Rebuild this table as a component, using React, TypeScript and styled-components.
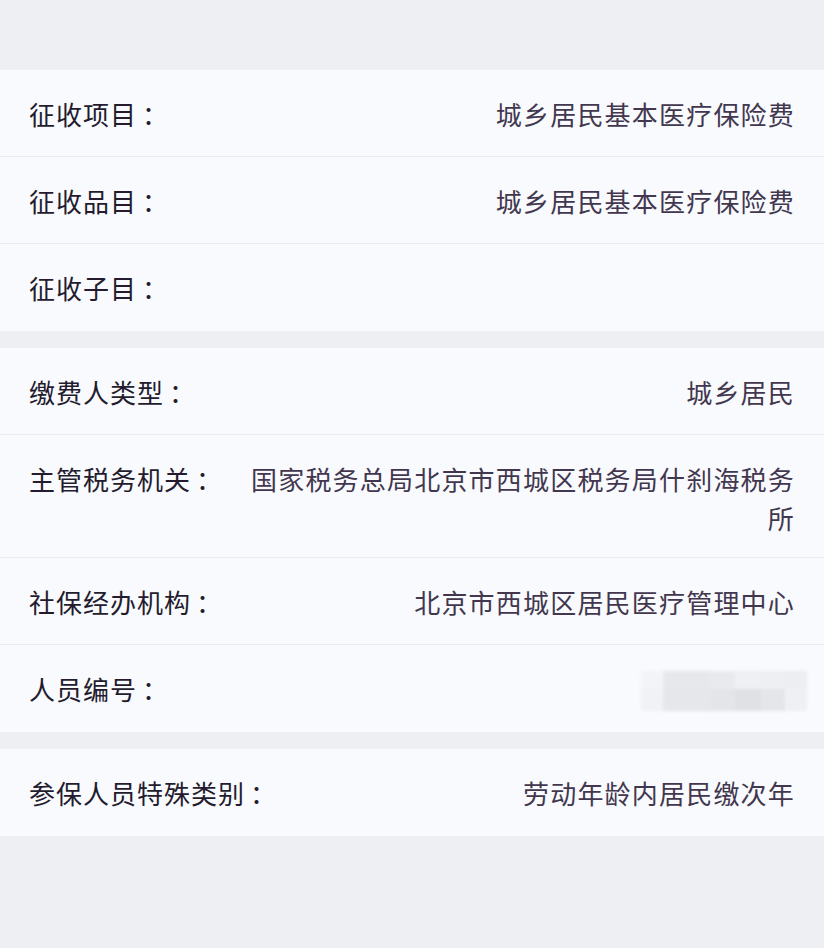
import React from "react";
import styled, { createGlobalStyle } from "styled-components";

const Global = createGlobalStyle`
  html, body { margin: 0; padding: 0; background: #eeeff2; }
  body { font-family: "Noto Sans CJK SC", "Noto Sans", sans-serif; }
`;

const Page = styled.div`
  width: 824px;
  min-height: 948px;
  background: #eeeff2;
  padding-top: 70px;
  box-sizing: border-box;
  display: flex;
  flex-direction: column;
  gap: 17px;
`;

const Group = styled.section`
  background: #f8fafd;
  display: flex;
  flex-direction: column;
`;

const Row = styled.div`
  box-sizing: border-box;
  min-height: 87px;
  display: flex;
  align-items: flex-start;
  gap: 16px;
  padding: 24px 29px 20px 29px;
  border-bottom: 1px solid #e9ecf0;
  &:last-child { border-bottom: none; }
`;

const Label = styled.div`
  flex-shrink: 0;
  font-size: 26px;
  letter-spacing: 1px;
  line-height: 39px;
  color: #241b2e;
`;

const Colon = styled.span`
  margin-left: 5px;
`;

const Value = styled.div`
  flex: 1;
  text-align: right;
  font-size: 26px;
  letter-spacing: 1.2px;
  line-height: 39px;
  color: #42374e;
`;

const Mosaic = styled.div`
  display: inline-grid;
  grid-template-columns: 22px 48px 24px 26px 24px 22px;
  grid-template-rows: 18px 22px;
  vertical-align: top;
  margin: 2px -12px -3px 0;
  filter: blur(1.5px);
`;

const Tile = styled.span<{ $c: string }>`
  background: ${(p) => p.$c};
`;

const tiles = [
  "#f3f4f7", "#e6e8ec", "#e8eaed", "#eef0f3", "#edeff2", "#eceef1",
  "#f1f2f5", "#e5e7eb", "#e3e5e9", "#dfe1e5", "#e4e6ea", "#eef0f3",
];

type Item = { label: string; value?: React.ReactNode };

const groups: Item[][] = [
  [
    { label: "征收项目", value: "城乡居民基本医疗保险费" },
    { label: "征收品目", value: "城乡居民基本医疗保险费" },
    { label: "征收子目", value: "" },
  ],
  [
    { label: "缴费人类型", value: "城乡居民" },
    { label: "主管税务机关", value: "国家税务总局北京市西城区税务局什刹海税务所" },
    { label: "社保经办机构", value: "北京市西城区居民医疗管理中心" },
    {
      label: "人员编号",
      value: (
        <Mosaic>
          {tiles.map((c, i) => (
            <Tile key={i} $c={c} />
          ))}
        </Mosaic>
      ),
    },
  ],
  [{ label: "参保人员特殊类别", value: "劳动年龄内居民缴次年" }],
];

export default function App() {
  return (
    <>
      <Global />
      <Page>
        {groups.map((g, gi) => (
          <Group key={gi}>
            {g.map((it) => (
              <Row key={it.label}>
                <Label>
                  {it.label}
                  <Colon>：</Colon>
                </Label>
                <Value>{it.value}</Value>
              </Row>
            ))}
          </Group>
        ))}
      </Page>
    </>
  );
}
